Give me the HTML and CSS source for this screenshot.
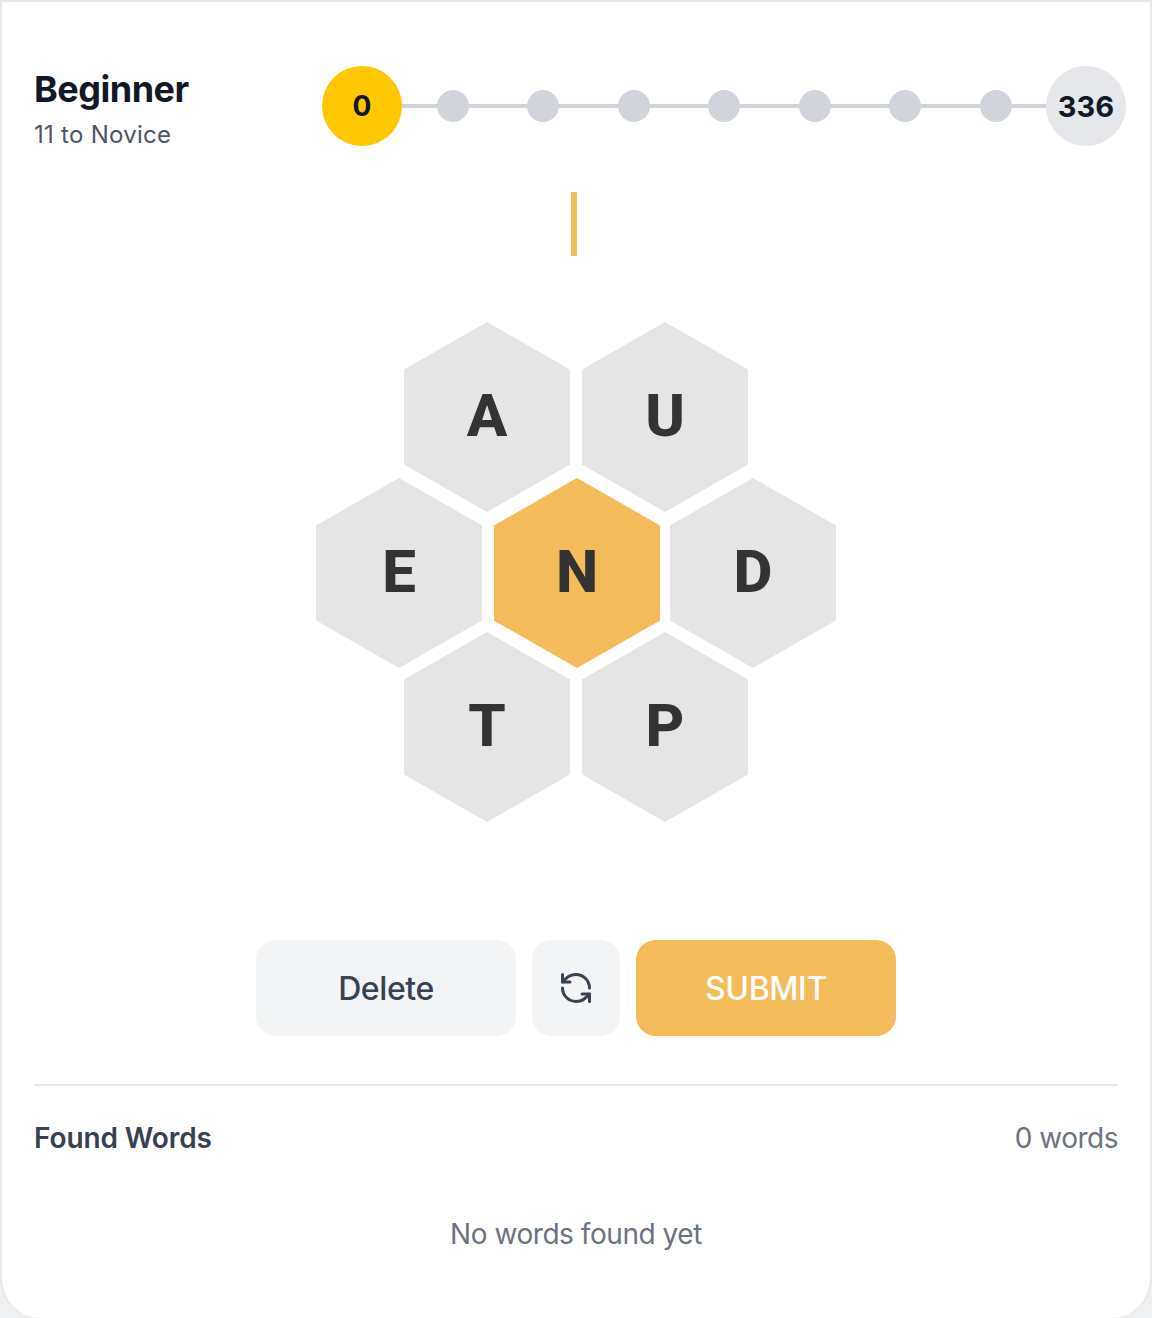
FILE: index.html
```html
<!DOCTYPE html>
<html lang="en">
<head>
  <meta charset="UTF-8">
  <meta name="viewport" content="width=device-width, initial-scale=1.0">
  <title>Spelling Bee</title>
  <link rel="stylesheet" href="styles.css">
</head>
<body>
  <div class="card">
    <!-- rank and score track -->
    <div class="header">
      <div class="rank">
        <div class="rank-name">Beginner</div>
        <div class="rank-next">11 to Novice</div>
      </div>
      <div class="track">
        <div class="stop"><span class="score current">0</span></div>
        <div class="stop"><span class="dot"></span></div>
        <div class="stop"><span class="dot"></span></div>
        <div class="stop"><span class="dot"></span></div>
        <div class="stop"><span class="dot"></span></div>
        <div class="stop"><span class="dot"></span></div>
        <div class="stop"><span class="dot"></span></div>
        <div class="stop"><span class="dot"></span></div>
        <div class="stop"><span class="score max">336</span></div>
      </div>
    </div>

    <div class="entry"><span class="caret"></span></div>

    <!-- letters -->
    <div class="hive">
      <div class="hive-row">
        <div class="hex">A</div>
        <div class="hex">U</div>
      </div>
      <div class="hive-row middle">
        <div class="hex">E</div>
        <div class="hex center">N</div>
        <div class="hex last">D</div>
      </div>
      <div class="hive-row bottom">
        <div class="hex">T</div>
        <div class="hex">P</div>
      </div>
    </div>

    <div class="actions">
      <button class="button delete">Delete</button>
      <button class="button shuffle" aria-label="Shuffle">
        <svg width="36" height="36" viewBox="0 0 24 24" fill="none" stroke="currentColor" stroke-width="2" stroke-linecap="round" stroke-linejoin="round">
          <path d="M21 12a9 9 0 0 0-9-9 9.75 9.75 0 0 0-6.74 2.74L3 8"/>
          <path d="M3 3v5h5"/>
          <path d="M3 12a9 9 0 0 0 9 9 9.75 9.75 0 0 0 6.74-2.74L21 16"/>
          <path d="M16 16h5v5"/>
        </svg>
      </button>
      <button class="button submit">SUBMIT</button>
    </div>

    <!-- found words -->
    <div class="found">
      <div class="found-head">
        <h3>Found Words</h3>
        <span class="found-count">0 words</span>
      </div>
      <p class="found-empty">No words found yet</p>
    </div>
  </div>
</body>
</html>
```

FILE: styles.css
```css
* {
  box-sizing: border-box;
}
body {
  margin: 0;
  background: #eef0f2;
  font-family: Inter, "Liberation Sans", sans-serif;
}
.card {
  height: 1318px;
  padding: 64px 32px 0;
  background: #fff;
  border: 2px solid #e5e7eb;
  border-bottom: none;
  border-radius: 0 0 40px 40px;
  overflow: hidden;
}
.header {
  display: flex;
  height: 80px;
  margin-right: -8px;
}
.rank {
  width: 288px;
  flex-shrink: 0;
}
.rank-name {
  margin-top: 1px;
  font-size: 36px;
  line-height: 44px;
  font-weight: 700;
  letter-spacing: -0.5px;
  color: #111827;
}
.rank-next {
  margin-top: 8px;
  font-size: 24px;
  line-height: 32px;
  letter-spacing: 0.27px;
  color: #4b5563;
}
.track {
  position: relative;
  flex: 1;
  height: 80px;
  padding: 0 40px;
  display: flex;
  justify-content: space-between;
  align-items: center;
}
.track::before {
  content: "";
  position: absolute;
  left: 40px;
  right: 40px;
  top: 38px;
  height: 4px;
  background: #d1d5db;
}
.stop {
  position: relative;
  width: 0;
  display: flex;
  justify-content: center;
  align-items: center;
}
.dot {
  flex-shrink: 0;
  width: 32px;
  height: 32px;
  border-radius: 50%;
  background: #d1d5db;
}
.score {
  flex-shrink: 0;
  width: 80px;
  height: 80px;
  border-radius: 50%;
  display: flex;
  justify-content: center;
  align-items: center;
  font-size: 28px;
  font-weight: 700;
  color: #111827;
}
.score.current {
  background: #ffc700;
}
.score.max {
  background: #e5e7eb;
  font-size: 29px;
}
.entry {
  height: 64px;
  margin-top: 46px;
  padding-right: 4px;
  display: flex;
  justify-content: center;
}
.caret {
  width: 6px;
  height: 64px;
  background: #f4bb5b;
}
.hive {
  margin-top: 66px;
}
.hive-row {
  display: flex;
  justify-content: center;
  gap: 12px;
}
.hive-row.middle {
  margin-top: -34px;
}
.hive-row.bottom {
  margin-top: -36px;
}
.hex {
  width: 166px;
  height: 190px;
  padding-bottom: 4px;
  display: flex;
  justify-content: center;
  align-items: center;
  clip-path: polygon(50% 0, 100% 25%, 100% 75%, 50% 100%, 0 75%, 0 25%);
  background: #e5e5e5;
  font-family: Roboto, "Liberation Sans", sans-serif;
  font-size: 60px;
  font-weight: 800;
  color: #333;
}
.hex.center {
  background: #f4bb5b;
}
.hex.last {
  margin-left: -2px;
}
.actions {
  margin-top: 118px;
  display: flex;
  justify-content: center;
  gap: 16px;
}
.button {
  height: 96px;
  border: none;
  border-radius: 20px;
  display: flex;
  justify-content: center;
  align-items: center;
  font-family: inherit;
  font-size: 32px;
  font-weight: 500;
  letter-spacing: -0.4px;
  cursor: pointer;
}
.delete {
  width: 260px;
  background: #f3f4f6;
  color: #374151;
}
.shuffle {
  width: 88px;
  background: #f3f4f6;
  color: #374151;
}
.submit {
  width: 260px;
  background: #f4bb5b;
  color: #fff;
}
.found {
  margin-top: 48px;
  border-top: 2px solid #e5e7eb;
  padding-top: 32px;
}
.found-head {
  display: flex;
  justify-content: space-between;
  align-items: center;
}
.found-head h3 {
  margin: 0;
  font-size: 28px;
  line-height: 40px;
  font-weight: 600;
  letter-spacing: -0.1px;
  color: #374151;
}
.found-count {
  font-size: 28px;
  line-height: 40px;
  letter-spacing: -0.5px;
  color: #6b7280;
}
.found-empty {
  margin: 56px 0 0;
  text-align: center;
  font-size: 28px;
  line-height: 40px;
  letter-spacing: -0.45px;
  color: #6b7280;
}
```
